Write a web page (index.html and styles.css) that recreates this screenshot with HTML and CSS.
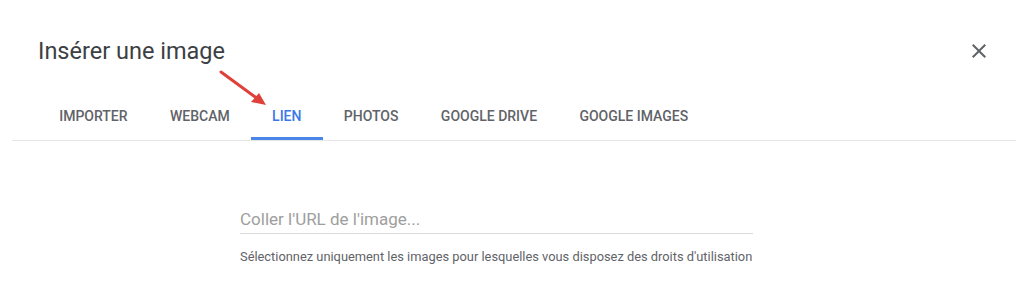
FILE: index.html
```html
<!DOCTYPE html>
<html lang="fr">
<head>
    <meta charset="UTF-8">
    <meta name="viewport" content="width=device-width, initial-scale=1.0">
    <title>Insérer une image</title>
    <link rel="stylesheet" href="styles.css">
</head>
<body>

    <div class="dialog">
        <div class="dialog-header">
            <h1 class="dialog-title">Insérer une image</h1>
            <button class="close-btn" aria-label="Fermer">
                <svg width="24" height="24" viewBox="0 0 24 24">
                    <path d="M19 6.41 17.59 5 12 10.59 6.41 5 5 6.41 10.59 12 5 17.59 6.41 19 12 13.41 17.59 19 19 17.59 13.41 12z" fill="#5f6368"/>
                </svg>
            </button>
        </div>

        <ul class="tabs">
            <li class="tab">Importer</li>
            <li class="tab">Webcam</li>
            <li class="tab active">Lien</li>
            <li class="tab">Photos</li>
            <li class="tab">Google Drive</li>
            <li class="tab">Google Images</li>
        </ul>

        <div class="panel">
            <div class="url-field">
                <input type="text" class="url-input" placeholder="Coller l'URL de l'image...">
                <p class="hint">Sélectionnez uniquement les images pour lesquelles vous disposez des droits d'utilisation</p>
            </div>
        </div>
    </div>

    <!-- flèche d'annotation -->
    <svg class="annotation" width="60" height="50" viewBox="0 0 60 50">
        <line x1="3" y1="3" x2="40" y2="30" stroke="#e0403a" stroke-width="3" stroke-linecap="round"/>
        <polygon points="48,36 33,33 41,24" fill="#e0403a"/>
    </svg>

</body>
</html>
```

FILE: styles.css
```css
body {
    margin: 0;
    padding: 0;
    background-color: #fff;
    font-family: Roboto, Arial, sans-serif;
    position: relative;
}
.dialog {
    margin: 0 8px 0 12px;
}
.dialog-header {
    display: flex;
    justify-content: space-between;
    align-items: center;
    padding: 35px 25px 0 26px;
    height: 32px;
}
.dialog-title {
    margin: 0;
    font-size: 23.5px;
    font-weight: 400;
    color: #3c4043;
}
.close-btn {
    border: none;
    background: none;
    padding: 0;
    width: 24px;
    height: 24px;
    cursor: pointer;
}
.tabs {
    display: flex;
    margin: 29px 0 0;
    padding: 0 0 0 26px;
    list-style-type: none;
    border-bottom: 1px solid #e6e6e6;
}
.tab {
    padding: 0 21.2px;
    height: 44px;
    line-height: 41px;
    font-size: 14px;
    font-weight: 500;
    text-transform: uppercase;
    color: #5f6368;
    border-bottom: 3px solid transparent;
    box-sizing: border-box;
    cursor: pointer;
}
.tab.active {
    color: #3b78e7;
    border-bottom-color: #4a86e8;
}
.panel {
    display: flex;
    padding-left: 228px;
    padding-top: 68px;
}
.url-field {
    width: 513px;
}
.url-input {
    display: block;
    width: 100%;
    box-sizing: border-box;
    border: none;
    border-bottom: 1px solid #dadada;
    padding: 0 0 4px;
    font-family: inherit;
    font-size: 17px;
    color: #333;
    outline: none;
}
.url-input::placeholder {
    color: #9e9e9e;
}
.hint {
    margin: 15px 0 0;
    font-size: 12.85px;
    white-space: nowrap;
    color: #5f6368;
}
.annotation {
    position: absolute;
    left: 218px;
    top: 69px;
}
```
